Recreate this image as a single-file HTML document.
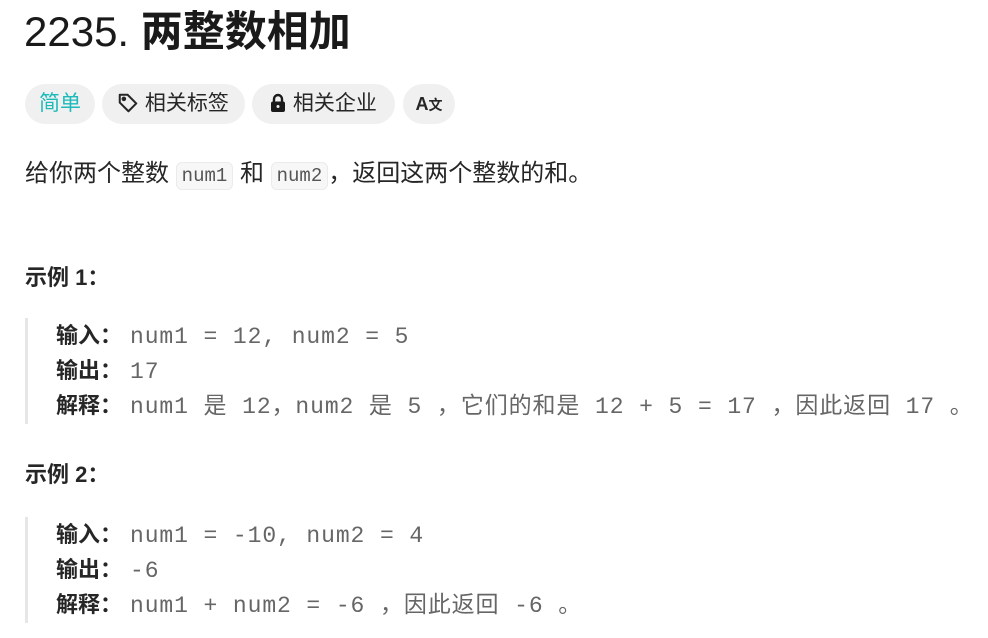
<!DOCTYPE html>
<html><head><meta charset="utf-8"><style>
*{margin:0;padding:0;box-sizing:border-box}
body{width:988px;height:638px;background:#fff;font-family:"Liberation Sans","Noto Sans CJK SC",sans-serif;color:#262626;position:relative;overflow:hidden}
h1{position:absolute;left:24px;top:8px;font-size:42px;line-height:48px;font-weight:normal;color:#1a1a1a;white-space:nowrap}
h1 b{font-weight:bold}
.tag{position:absolute;top:84px;height:40px;border-radius:20px;background:#f0f0f0;font-size:21px;line-height:40px;color:#262626;white-space:nowrap}
p.d{position:absolute;left:25px;top:156px;font-size:24px;line-height:36px;white-space:nowrap;color:#262626}
code{font-family:"Liberation Mono",monospace;font-size:19px;background:#f7f7f8;border:1px solid #ebebeb;border-radius:6px;padding:2px 5px;color:#555}
.h{position:absolute;left:25px;font-size:22px;font-weight:bold;color:#262626;white-space:nowrap}
.bq{position:absolute;left:25px;width:3px;background:#e6e6e6}
.ln{position:absolute;left:56px;height:35px;line-height:35px;white-space:pre}
.lb{display:inline-block;width:74px;font-size:22px;font-weight:bold;color:#262626}
.v{font-family:"Liberation Mono","Noto Sans CJK SC",monospace;font-size:23px;letter-spacing:0.9px;color:#666}
</style></head><body>
<h1>2235. <b>两整数相加</b></h1>
<div class="tag" style="left:25px;width:70px;text-align:center;color:#1cbaba">简单</div>
<div class="tag" style="left:102px;width:143px;padding-left:15px">
<svg width="22" height="22" viewBox="0 0 24 24" style="vertical-align:-4px" fill="none" stroke="#262626" stroke-width="2.2" stroke-linejoin="round"><path d="M3 3h8.5l9.5 9.5-8.5 8.5L3 11.5z"/><circle cx="7.5" cy="7.5" r="1.4" fill="#262626"/></svg> 相关标签</div>
<div class="tag" style="left:252px;width:143px;padding-left:17px">
<svg width="18" height="20" viewBox="0 0 18 20" style="vertical-align:-3px"><path d="M5 9V6a4 4 0 0 1 8 0v3" fill="none" stroke="#1a1a1a" stroke-width="2.4"/><rect x="2" y="8.5" width="14" height="10.5" rx="2" fill="#1a1a1a"/><circle cx="9" cy="13.5" r="1.5" fill="#f0f0f0"/></svg> 相关企业</div>
<div class="tag" style="left:403px;width:52px;text-align:center;font-size:18px;font-weight:bold">A<span style="font-size:14px">文</span></div>
<p class="d">给你两个整数 <code>num1</code> 和 <code>num2</code>，返回这两个整数的和。</p>
<div class="h" style="top:260px">示例 1：</div>
<div class="bq" style="top:318px;height:106px"></div>
<div class="ln" style="top:318px"><span class="lb">输入：</span><span class="v">num1 = 12, num2 = 5</span></div>
<div class="ln" style="top:353px"><span class="lb">输出：</span><span class="v">17</span></div>
<div class="ln" style="top:388px"><span class="lb">解释：</span><span class="v">num1 是 12，num2 是 5 ，它们的和是 12 + 5 = 17 ，因此返回 17 。</span></div>
<div class="h" style="top:457px">示例 2：</div>
<div class="bq" style="top:517px;height:106px"></div>
<div class="ln" style="top:517px"><span class="lb">输入：</span><span class="v">num1 = -10, num2 = 4</span></div>
<div class="ln" style="top:552px"><span class="lb">输出：</span><span class="v">-6</span></div>
<div class="ln" style="top:587px"><span class="lb">解释：</span><span class="v">num1 + num2 = -6 ，因此返回 -6 。</span></div>
</body></html>
